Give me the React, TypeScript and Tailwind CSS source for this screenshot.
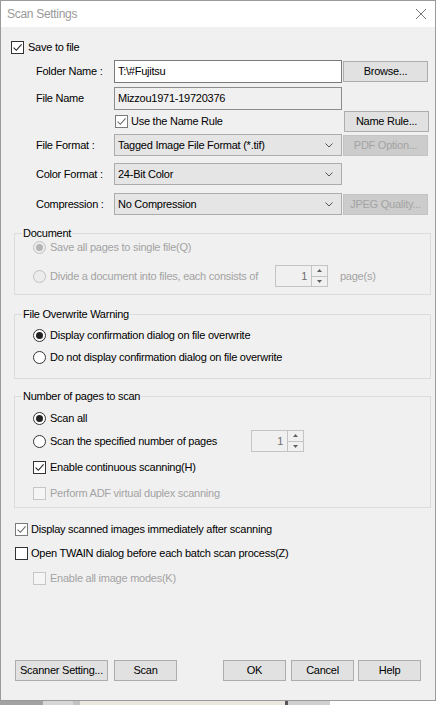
import React from 'react';

type Tone = 'dark' | 'soft' | 'off';

const boxTone: Record<Tone, string> = {
  dark: 'border-[#333333] bg-white',
  soft: 'border-[#7a7a7a] bg-white',
  off: 'border-[#c6c6c6] bg-[#f5f5f5]',
};

const CheckBox = ({ checked = false, tone = 'dark' }: { checked?: boolean; tone?: Tone }) => (
  <span className={`flex h-[13px] w-[13px] shrink-0 items-center justify-center border ${boxTone[tone]}`}>
    {checked && (
      <svg width="11" height="11" viewBox="0 0 11 11">
        <path d="M1.6 5.6 4.3 8.3 9.6 2.4" fill="none" stroke={tone === 'soft' ? '#6a6a6a' : '#222222'} strokeWidth="1.1" />
      </svg>
    )}
  </span>
);

const Radio = ({ on = false, off = false }: { on?: boolean; off?: boolean }) => (
  <span
    className={`flex h-[13px] w-[13px] shrink-0 items-center justify-center rounded-full border ${
      off ? 'border-[#c0c0c0] bg-[#ececec]' : 'border-[#333333] bg-white'
    }`}
  >
    {on && <span className={`h-[7px] w-[7px] rounded-full ${off ? 'bg-[#b4b4b4]' : 'bg-[#222222]'}`} />}
  </span>
);

const Btn = ({ label, w, off = false }: { label: string; w: string; off?: boolean }) => (
  <div
    className={`flex h-[21px] shrink-0 items-center justify-center border ${w} ${
      off ? 'border-[#c4c4c4] bg-[#cccccc] text-[#a3a3a3]' : 'border-[#adadad] bg-[#e1e1e1]'
    }`}
  >
    {label}
  </div>
);

const Select = ({ value }: { value: string }) => (
  <div className="flex h-[22px] w-[228px] shrink-0 items-center border border-[#acacac] bg-[#e5e5e5] pl-[3px] pr-[8px]">
    <span className="flex-1">{value}</span>
    <svg width="8" height="5" viewBox="0 0 8 5">
      <path d="M0.5 0.5 4 4 7.5 0.5" fill="none" stroke="#555555" />
    </svg>
  </div>
);

const Spin = () => (
  <div className="flex h-[22px] w-[53px] shrink-0 border border-[#c4c4c4] bg-[#f0f0f0]">
    <span className="flex-1 pr-[4px] text-right leading-[20px] text-[#6d6d6d]">1</span>
    <div className="flex w-[16px] flex-col border-l border-[#c4c4c4]">
      <div className="flex flex-1 items-center justify-center border-b border-[#c4c4c4]">
        <svg width="5" height="3" viewBox="0 0 5 3">
          <path d="M0 3 2.5 0 5 3Z" fill="#606060" />
        </svg>
      </div>
      <div className="flex flex-1 items-center justify-center">
        <svg width="5" height="3" viewBox="0 0 5 3">
          <path d="M0 0 2.5 3 5 0Z" fill="#606060" />
        </svg>
      </div>
    </div>
  </div>
);

const Legend = ({ title }: { title: string }) => (
  <legend className="ml-[7px] h-[14px] px-[1px] leading-[14px]">{title}</legend>
);

export default function App() {
  return (
    <div className="flex h-[705px] w-[438px] flex-col overflow-hidden bg-white font-['Liberation_Sans',Arial,sans-serif] text-[11px] tracking-[-0.25px] text-black">
      <div className="flex h-[701px] w-[436px] shrink-0 flex-col border border-[#9a9a9a] bg-[#f0f0f0]">
        <div className="flex h-[26px] shrink-0 items-center justify-between bg-white pl-[6px] pr-[9px] text-[12px] tracking-[-0.3px] text-[#999999]">
          <span>Scan Settings</span>
          <svg width="10" height="10" viewBox="0 0 10 10">
            <path d="M0 0 10 10M10 0 0 10" stroke="#777777" />
          </svg>
        </div>

        <div className="mt-[11px] flex h-[18px] items-center gap-[4px] pl-[10px]">
          <CheckBox checked />
          <span>Save to file</span>
        </div>

        <div className="mt-[4px] flex h-[23px] items-center pl-[35px]">
          <span className="w-[78px]">Folder Name :</span>
          <div className="flex h-[23px] w-[228px] items-center border border-[#7a7a7a] bg-white pl-[3px]">T:\#Fujitsu</div>
          <div className="ml-[1px]">
            <Btn label="Browse..." w="w-[85px]" />
          </div>
        </div>

        <div className="mt-[4px] flex h-[23px] items-center pl-[35px]">
          <span className="w-[78px]">File Name</span>
          <div className="flex h-[23px] w-[228px] items-center border border-[#8c8c8c] bg-[#f0f0f0] pl-[3px]">Mizzou1971-19720376</div>
        </div>

        <div className="mt-[1px] flex h-[21px] items-center pl-[114px]">
          <div className="flex w-[228px] items-center gap-[3px]">
            <CheckBox checked tone="soft" />
            <span>Use the Name Rule</span>
          </div>
          <div className="ml-[1px]">
            <Btn label="Name Rule..." w="w-[85px]" />
          </div>
        </div>

        <div className="mt-[2px] flex h-[22px] items-center pl-[35px]">
          <span className="w-[78px]">File Format :</span>
          <Select value="Tagged Image File Format (*.tif)" />
          <div className="ml-[1px]">
            <Btn label="PDF Option..." w="w-[85px]" off />
          </div>
        </div>

        <div className="mt-[7px] flex h-[22px] items-center pl-[35px]">
          <span className="w-[78px]">Color Format :</span>
          <Select value="24-Bit Color" />
        </div>

        <div className="mt-[8px] flex h-[22px] items-center pl-[35px]">
          <span className="w-[78px]">Compression :</span>
          <Select value="No Compression" />
          <div className="ml-[1px]">
            <Btn label="JPEG Quality..." w="w-[85px]" off />
          </div>
        </div>

        <fieldset className="ml-[13px] mt-[11px] w-[417px] border border-[#dcdcdc] pb-[7px]">
          <Legend title="Document" />
          <div className="pl-[18px] text-[#a3a3a3]">
            <div className="flex h-[14px] items-center gap-[4px]">
              <Radio on off />
              <span>Save all pages to single file(Q)</span>
            </div>
            <div className="mt-[11px] flex h-[22px] items-center">
              <div className="flex w-[242px] items-center gap-[4px]">
                <Radio off />
                <span>Divide a document into files, each consists of</span>
              </div>
              <Spin />
              <span className="ml-[12px]">page(s)</span>
            </div>
          </div>
        </fieldset>

        <fieldset className="ml-[13px] mt-[12px] w-[417px] border border-[#dcdcdc] pb-[14px]">
          <Legend title="File Overwrite Warning" />
          <div className="pl-[18px]">
            <div className="mt-[7px] flex h-[14px] items-center gap-[4px]">
              <Radio on />
              <span>Display confirmation dialog on file overwrite</span>
            </div>
            <div className="mt-[8px] flex h-[14px] items-center gap-[4px]">
              <Radio />
              <span>Do not display confirmation dialog on file overwrite</span>
            </div>
          </div>
        </fieldset>

        <fieldset className="ml-[13px] mt-[10px] w-[417px] border border-[#dcdcdc] pb-[7px]">
          <Legend title="Number of pages to scan" />
          <div className="pl-[18px]">
            <div className="mt-[8px] flex h-[14px] items-center gap-[4px]">
              <Radio on />
              <span>Scan all</span>
            </div>
            <div className="mt-[5px] flex h-[22px] items-center">
              <div className="flex w-[218px] items-center gap-[4px]">
                <Radio />
                <span>Scan the specified number of pages</span>
              </div>
              <Spin />
            </div>
            <div className="mt-[8px] flex h-[14px] items-center gap-[4px]">
              <CheckBox checked />
              <span>Enable continuous scanning(H)</span>
            </div>
            <div className="mt-[12px] flex h-[14px] items-center gap-[4px] text-[#a3a3a3]">
              <CheckBox tone="off" />
              <span>Perform ADF virtual duplex scanning</span>
            </div>
          </div>
        </fieldset>

        <div className="mt-[14px] flex h-[14px] items-center gap-[3px] pl-[14px]">
          <CheckBox checked tone="soft" />
          <span>Display scanned images immediately after scanning</span>
        </div>
        <div className="mt-[10px] flex h-[14px] items-center gap-[3px] pl-[14px]">
          <CheckBox />
          <span>Open TWAIN dialog before each batch scan process(Z)</span>
        </div>
        <div className="mt-[11px] flex h-[14px] items-center gap-[4px] pl-[32px] text-[#a3a3a3]">
          <CheckBox tone="off" />
          <span>Enable all image modes(K)</span>
        </div>

        <div className="mt-[75px] flex items-center pl-[14px]">
          <Btn label="Scanner Setting..." w="w-[93px]" />
          <div className="ml-[6px]">
            <Btn label="Scan" w="w-[63px]" />
          </div>
          <div className="ml-[46px]">
            <Btn label="OK" w="w-[63px]" />
          </div>
          <div className="ml-[5px]">
            <Btn label="Cancel" w="w-[63px]" />
          </div>
          <div className="ml-[4px]">
            <Btn label="Help" w="w-[63px]" />
          </div>
        </div>
      </div>

      <div className="flex h-[4px] shrink-0">
        <div className="w-[43px] bg-[#a2a2a2]" />
        <div className="w-[30px] bg-[#d6d6d6]" />
        <div className="w-[7px] bg-[#c2c2c2]" />
        <div className="w-[205px] bg-[#ebe8df]" />
        <div className="w-[3px] bg-[#555555]" />
        <div className="w-[42px] bg-[#cfcfcf]" />
        <div className="flex-1 bg-white" />
      </div>
    </div>
  );
}
